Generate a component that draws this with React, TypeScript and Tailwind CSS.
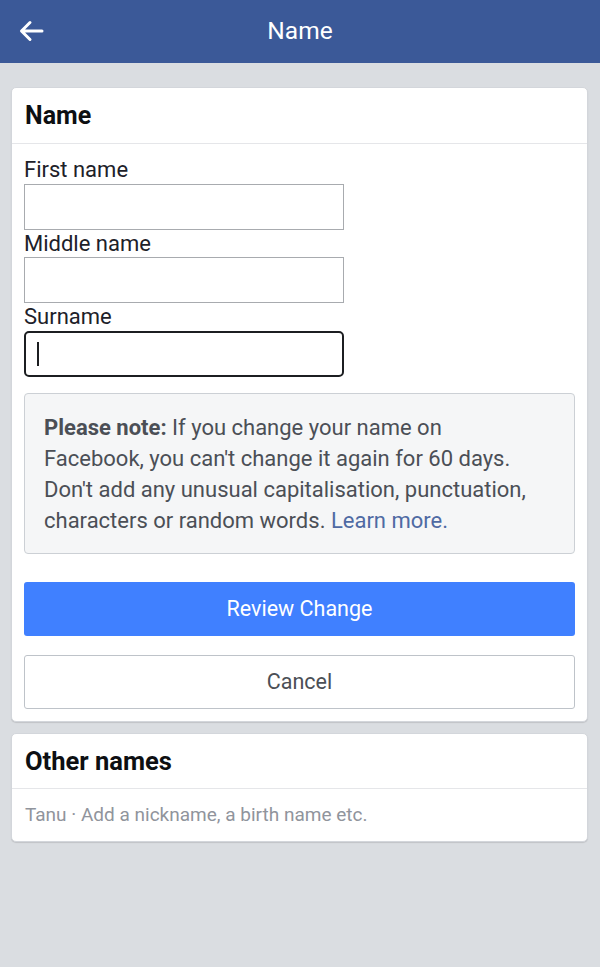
import React from "react";

export default function App() {
  return (
    <div className="min-h-[967px] w-[600px] bg-[#dadde1]" style={{ fontFamily: "Roboto, 'Noto Sans', sans-serif" }}>
      <div className="relative flex h-[63px] items-center justify-center bg-[#3b5998]">
        <svg className="absolute left-[18px] top-[19px]" width="26" height="24" viewBox="0 0 26 24" fill="none">
          <path d="M24 12H4M12 3.5L3.5 12L12 20.5" stroke="white" strokeWidth="3" strokeLinecap="round" strokeLinejoin="round" />
        </svg>
        <span className="text-[24.5px] text-white">Name</span>
      </div>

      <div className="ml-[11px] mr-[12px] mt-[24px] rounded-[5px] border border-[#d3d6db] bg-white pb-[12px] shadow-[0_1px_1px_rgba(0,0,0,0.12)]">
        <div className="flex h-[56px] items-center border-b border-[#e5e6e9] px-[13px]">
          <span className="text-[25px] font-bold text-[#0d0f12]">Name</span>
        </div>
        <div className="px-[12px] pt-[14px]">
          <div className="text-[22px] leading-[24px] text-[#1d2129]">First name</div>
          <div className="mt-[2px] h-[46px] w-[320px] border border-[#a8abaf] bg-white"></div>
          <div className="mt-[2px] text-[22px] leading-[24px] text-[#1d2129]">Middle name</div>
          <div className="mt-[1px] h-[46px] w-[320px] border border-[#a8abaf] bg-white"></div>
          <div className="mt-[2px] text-[22px] leading-[24px] text-[#1d2129]">Surname</div>
          <div className="mt-[2px] flex h-[46px] w-[320px] items-center rounded-[5px] border-2 border-[#1c1e21] bg-white pl-[11px]">
            <div className="h-[24px] w-[2px] bg-[#1c1e21]"></div>
          </div>

          <div className="mt-[16px] rounded-[4px] border border-[#ccd0d5] bg-[#f5f6f7] pb-[17px] pl-[19px] pr-[8px] pt-[18px] text-[22px] leading-[31px] whitespace-nowrap text-[#4b4f56]">
            <span className="font-bold">Please note:</span> If you change your name on
            <br />
            Facebook, you can't change it again for 60 days.
            <br />
            Don't add any unusual capitalisation, punctuation,
            <br />
            characters or random words. <span className="text-[#4f6aa3]">Learn more.</span>
          </div>

          <div className="mt-[28px] flex h-[54px] items-center justify-center rounded-[3px] bg-[#4080ff] text-[21.5px] text-white">
            Review Change
          </div>
          <div className="mt-[19px] flex h-[54px] items-center justify-center rounded-[3px] border border-[#bec3c9] bg-white text-[21.5px] text-[#4b4f56]">
            Cancel
          </div>
        </div>
      </div>

      <div className="ml-[11px] mr-[12px] mt-[11px] rounded-[5px] border border-[#d3d6db] bg-white shadow-[0_1px_1px_rgba(0,0,0,0.12)]">
        <div className="flex h-[55px] items-center border-b border-[#e5e6e9] px-[13px]">
          <span className="text-[25.5px] font-bold text-[#0d0f12]">Other names</span>
        </div>
        <div className="flex h-[52px] items-center px-[13px] text-[19px] text-[#90949c]">
          Tanu · Add a nickname, a birth name etc.
        </div>
      </div>
    </div>
  );
}
